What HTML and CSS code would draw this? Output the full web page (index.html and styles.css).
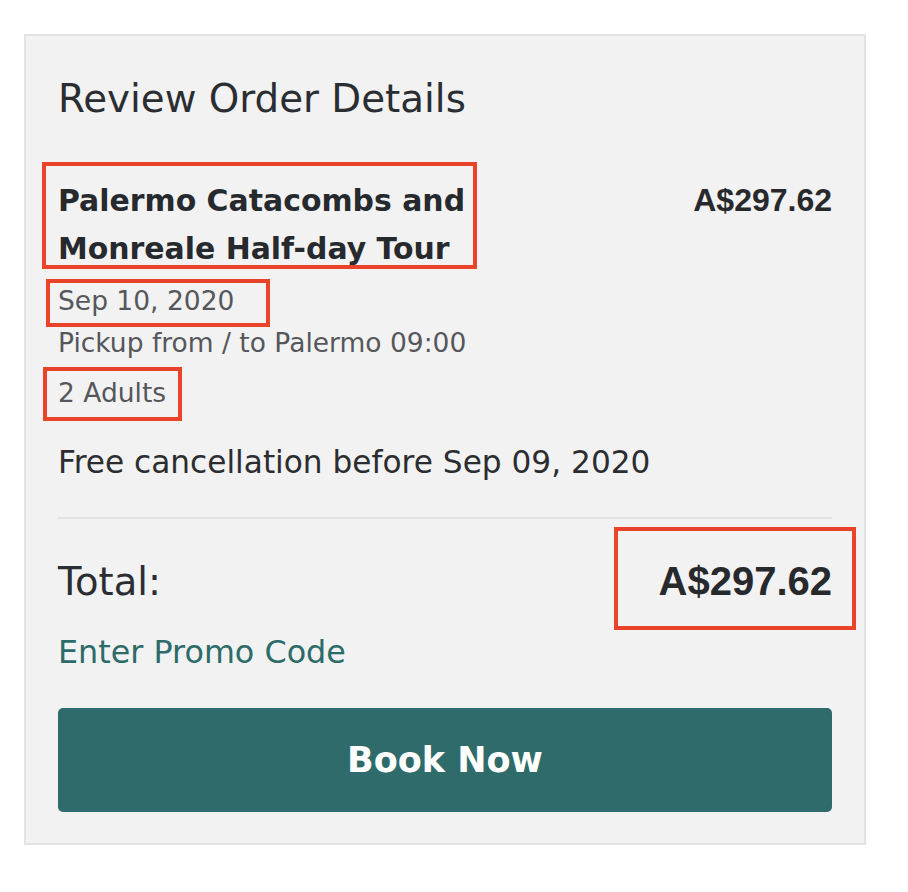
FILE: index.html
```html
<!DOCTYPE html>
<html lang="en">
<head>
<meta charset="utf-8">
<title>Review Order Details</title>
<link rel="stylesheet" href="styles.css">
</head>
<body>
<div class="page">
  <section class="card">
    <h2 class="card-title">Review Order Details</h2>
    <div class="item-row">
      <div class="item-name">Palermo Catacombs and<br>Monreale Half-day Tour</div>
      <div class="item-price">A$297.62</div>
    </div>
    <div class="detail detail-date">Sep 10, 2020</div>
    <div class="detail">Pickup from / to Palermo 09:00</div>
    <div class="detail detail-adults">2 Adults</div>
    <div class="cancel">Free cancellation before Sep 09, 2020</div>
    <hr class="divider">
    <div class="total-row">
      <span class="total-label">Total:</span>
      <span class="total-price">A$297.62</span>
    </div>
    <a class="promo" href="#">Enter Promo Code</a>
    <button class="book-btn" type="button">Book Now</button>
  </section>
  <div class="mark mark-name"></div>
  <div class="mark mark-date"></div>
  <div class="mark mark-adults"></div>
  <div class="mark mark-total"></div>
</div>
</body>
</html>
```

FILE: styles.css
```css
html, body {
  margin: 0;
  padding: 0;
  background: #ffffff;
}

.page {
  position: relative;
  padding: 34px 0 40px 24px;
  font-family: "DejaVu Sans", "Noto Sans", sans-serif;
}

.card {
  box-sizing: border-box;
  width: 842px;
  background: #f2f2f2;
  border: 2px solid #e3e3e3;
  padding: 40px 32px 31px 32px;
  display: flex;
  flex-direction: column;
}

.card-title {
  margin: 0;
  font-weight: normal;
  font-size: 38.8px;
  line-height: 46px;
  color: #2a2d31;
}

.item-row {
  margin-top: 55px;
  display: flex;
  justify-content: space-between;
  align-items: baseline;
}

.item-name {
  font-weight: bold;
  font-size: 29.9px;
  line-height: 48px;
  color: #26292d;
}

.item-price {
  font-family: "Liberation Sans", Arial, sans-serif;
  font-weight: bold;
  font-size: 32px;
  color: #27292d;
}

.detail {
  font-size: 26.5px;
  line-height: 42px;
  color: #55575b;
}

.detail-date {
  margin-top: 7px;
}

.detail-adults {
  margin-top: 8px;
}

.cancel {
  margin-top: 28px;
  font-size: 31.2px;
  line-height: 40px;
  color: #2b2d30;
}

.divider {
  margin: 35px 0 0 0;
  border: 0;
  height: 2px;
  background: #e2e2e2;
}

.total-row {
  margin-top: 37px;
  display: flex;
  justify-content: space-between;
  align-items: baseline;
  line-height: 50px;
}

.total-label {
  font-size: 38.5px;
  color: #2a2d31;
}

.total-price {
  font-family: "Liberation Sans", Arial, sans-serif;
  font-weight: bold;
  font-size: 40px;
  color: #27292d;
}

.promo {
  margin-top: 25px;
  font-size: 31.8px;
  line-height: 40px;
  color: #2d6b69;
  text-decoration: none;
  align-self: flex-start;
}

.book-btn {
  margin-top: 36px;
  height: 104px;
  border: 0;
  border-radius: 5px;
  background: #2e6b6a;
  color: #ffffff;
  font-family: "DejaVu Sans", "Noto Sans", sans-serif;
  font-weight: bold;
  font-size: 35px;
  padding: 0;
}

.mark {
  position: absolute;
  box-sizing: border-box;
  border: 4px solid #e9432a;
}

.mark-name {
  left: 42px;
  top: 162px;
  width: 435px;
  height: 107px;
}

.mark-date {
  left: 46px;
  top: 279px;
  width: 224px;
  height: 48px;
}

.mark-adults {
  left: 43px;
  top: 367px;
  width: 139px;
  height: 54px;
}

.mark-total {
  left: 614px;
  top: 527px;
  width: 242px;
  height: 103px;
}
```
